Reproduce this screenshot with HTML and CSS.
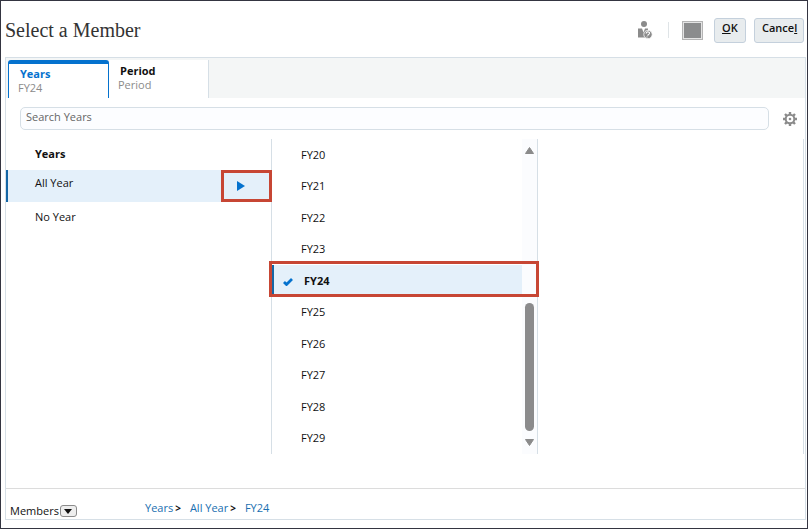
FILE: index.html
```html
<!DOCTYPE html>
<html lang="en">
<head>
	<meta charset="UTF-8">
	<title>Select a Member</title>
	<link rel="stylesheet" href="styles.css">
</head>
<body>
	<div class="dialog">
		<header class="header">
			<h1 class="title">Select a Member</h1>
			<button class="icon-btn user-btn" aria-label="User help">
				<svg width="16" height="20" viewBox="0 0 16 20">
					<circle cx="7" cy="4" r="3" fill="#8b8b8b"/>
					<path d="M1 8.500h4l1.500 4L8 8.500h3v9H1z" fill="#8b8b8b"/>
					<circle cx="11" cy="14.500" r="4.200" fill="#8b8b8b" stroke="#fff" stroke-width=".8"/>
					<path d="M9 13.500q.5-2 2.500-1.500 2 .8.500 2.200L10.500 15.500M10 16.500v1" fill="none" stroke="#fff" stroke-width="1.100"/>
				</svg>
			</button>
			<span class="divider"></span>
			<button class="icon-btn" aria-label="Maximize">
				<svg width="21" height="19" viewBox="0 0 21 19">
					<rect x=".5" y=".5" width="20" height="18" fill="#e4e4e4" stroke="#b4b4b4"/>
					<rect x="2" y="2" width="17" height="15" fill="#8b8c8d"/>
				</svg>
			</button>
			<button class="btn btn-ok"><u>O</u>K</button>
			<button class="btn btn-cancel">Cance<u>l</u></button>
		</header>

		<main class="panel">
			<nav class="tabs">
				<button class="tab active"><b>Years</b><span>FY24</span></button>
				<button class="tab"><b>Period</b><span>Period</span></button>
			</nav>

			<div class="search">
				<input class="search-box" type="text" placeholder="Search Years" aria-label="Search Years">
				<button class="icon-btn" aria-label="Settings">
					<svg width="16" height="16" viewBox="0 0 16 16" fill="none" stroke="#8b8b8b">
						<circle cx="8" cy="8" r="4.300" stroke-width="2"/>
						<path d="M8 1v2.500M8 12.500V15M1 8h2.500M12.500 8H15M3 3l1.800 1.800M11.200 11.200L13 13M13 3l-1.800 1.800M4.800 11.200L3 13" stroke-width="2.400"/>
						<circle cx="8" cy="8" r="1.300" fill="#8b8b8b" stroke="none"/>
					</svg>
				</button>
			</div>

			<div class="columns">
				<ul class="column parents">
					<li class="heading">Years</li>
					<li class="selected">
						<button class="member">All Year</button>
						<button class="expand" aria-label="Expand All Year">
							<svg width="10" height="10" viewBox="0 0 10 10"><path d="M1 0l8 5-8 5z" fill="#0572ce"/></svg>
						</button>
					</li>
					<li><button class="member">No Year</button></li>
				</ul>

				<div class="column children">
					<ul class="list">
						<li><button class="member">FY20</button></li>
						<li><button class="member">FY21</button></li>
						<li><button class="member">FY22</button></li>
						<li><button class="member">FY23</button></li>
						<li class="selected">
							<button class="member">
								<svg class="check" width="10" height="8" viewBox="0 0 10 8"><path d="M1 4l2.500 2.500L9 1" fill="none" stroke="#0572ce" stroke-width="2.800"/></svg>
								FY24
							</button>
							<span class="callout"></span>
						</li>
						<li><button class="member">FY25</button></li>
						<li><button class="member">FY26</button></li>
						<li><button class="member">FY27</button></li>
						<li><button class="member">FY28</button></li>
						<li><button class="member">FY29</button></li>
					</ul>
					<div class="scrollbar">
						<svg width="9" height="7" viewBox="0 0 9 7"><path d="M4.500 .5L8.500 6.500H.5z" fill="#8b8b8b" stroke="#8b8b8b" stroke-linejoin="round"/></svg>
						<span class="thumb"></span>
						<svg width="9" height="7" viewBox="0 0 9 7"><path d="M4.500 6.500L8.500 .5H.5z" fill="#8b8b8b" stroke="#8b8b8b" stroke-linejoin="round"/></svg>
					</div>
				</div>

				<div class="column"></div>
			</div>

			<footer class="footer">
				<div class="members">
					Members
					<button class="drop" aria-label="Members menu">
						<svg width="8" height="5" viewBox="0 0 8 5"><path d="M0 0h8L4 5z" fill="#111"/></svg>
					</button>
				</div>
				<nav class="crumbs">
					<a href="#">Years</a><b>&gt;</b>
					<a href="#">All Year</a><b>&gt;</b>
					<a href="#">FY24</a>
				</nav>
			</footer>
		</main>
	</div>
</body>
</html>
```
FILE: styles.css
```css
* {
	box-sizing: border-box;
}
body {
	margin: 0;
	font: 11px/16px "Open Sans", "Noto Sans", sans-serif;
	color: #111;
	background: #fff;
}
button {
	margin: 0;
	padding: 0;
	border: none;
	background: none;
	font: inherit;
	color: inherit;
	text-align: left;
	cursor: pointer;
}
svg {
	display: block;
}
ul {
	list-style: none;
	margin: 0;
	padding: 0;
}

.dialog {
	display: flex;
	flex-direction: column;
	min-height: 100vh;
	padding: 0 1px 8px 4px;
	border: 1px solid #343541;
}

/* header */
.header {
	display: flex;
	align-items: center;
	height: 56px;
	padding: 2px 2px 0 0;
}
.title {
	flex: 1;
	margin: 0;
	font: 20px/24px Georgia, "Liberation Serif", serif;
	color: #333;
}
.user-btn {
	margin-right: 15px;
}
.divider {
	width: 1px;
	height: 16px;
	margin-right: 13px;
	background: #dfe4e7;
}
.btn {
	height: 25px;
	padding: 0 7px 4px;
	border: 1px solid #c4d0dc;
	border-radius: 3px;
	background: #e8ecee;
	font-weight: 600;
}
.btn-ok {
	width: 32px;
	margin: 0 8px 0 11px;
}
.btn-cancel {
	width: 50px;
}

/* panel */
.panel {
	flex: 1;
	display: flex;
	flex-direction: column;
	border: 1px solid #d6dfe6;
}
.tabs {
	display: flex;
	height: 40px;
	padding: 2px 2px 0;
	background: #f4f6f6;
}
.tab {
	display: flex;
	flex-direction: column;
	width: 100px;
	padding: 4px 9px 0;
	border-right: 1px solid #d6dfe6;
	background: #fff;
	line-height: 14px;
}
.tab b {
	padding-left: 2px;
}
.tab span {
	color: #8b8b8b;
}
.tab.active {
	width: 101px;
	padding-top: 3px;
	border: solid #0572ce;
	border-width: 4px 1px 0;
	border-radius: 3px 3px 0 0;
}
.tab.active b {
	color: #0572ce;
}
.search {
	display: flex;
	align-items: center;
	gap: 13px;
	padding: 9px 7px 9px 14px;
}
.search-box {
	flex: 1;
	height: 23px;
	padding: 0 5px 4px;
	border: 1px solid #d6dfe6;
	border-radius: 5px;
	background: #fcfdff;
	font: inherit;
}
.search-box::placeholder {
	color: #666;
	opacity: 1;
}

/* member columns */
.columns {
	display: grid;
	grid-template-columns: repeat(3, 1fr);
	height: 315px;
	margin-right: 1px;
}
.column {
	border-right: 1px solid #d6dfe6;
}
.column li {
	position: relative;
	display: flex;
	align-items: center;
}
.member {
	flex: 1;
}
.selected {
	background: #e4f0fa;
}
.parents li {
	height: 32px;
	padding: 0 0 2px 29px;
}
.parents .heading {
	height: 31px;
	font-weight: bold;
}
.parents .selected {
	padding: 0 0 6px 27px;
	border-left: 2px solid #1466a5;
}
.expand {
	position: absolute;
	top: 0;
	right: -1px;
	width: 51px;
	height: 32px;
	padding-left: 12px;
	border: 3px solid #c74634;
}
.children {
	display: flex;
}
.list {
	flex: 1;
	display: flex;
	flex-direction: column;
}
.list li {
	flex: 1;
	padding-left: 29px;
}
.list .selected {
	padding-left: 9px;
	border-left: 2px solid #1466a5;
	font-weight: bold;
}
.list .selected .member {
	display: flex;
	align-items: center;
	gap: 11px;
}
.check {
	margin-top: 2px;
}
.callout {
	position: absolute;
	top: -4px;
	right: -17px;
	bottom: 0;
	left: -5px;
	border: 3px solid #c74634;
}
.scrollbar {
	display: flex;
	flex-direction: column;
	align-items: center;
	width: 15px;
	padding: 8px 0;
	background: #fbfcfe;
}
.thumb {
	width: 9px;
	height: 128px;
	margin: auto 0 8px;
	border-radius: 5px;
	background: #8b8b8c;
}

/* footer */
.footer {
	display: flex;
	align-items: flex-end;
	height: 31px;
	margin-top: auto;
	padding-left: 4px;
	border-top: 1px solid #dcdcdc;
}
.members {
	display: flex;
	align-items: center;
	gap: 1px;
	width: 135px;
}
.drop {
	display: flex;
	align-items: center;
	justify-content: center;
	width: 17px;
	height: 12px;
	border: 1px solid #8b8b8b;
	border-radius: 3px;
	background: #eee;
}
.crumbs {
	display: flex;
	padding-bottom: 3px;
}
.crumbs a {
	color: #1a6fb0;
	text-decoration: none;
}
.crumbs b {
	margin: 0 9px 0 2px;
	font-size: 10px;
}
```
